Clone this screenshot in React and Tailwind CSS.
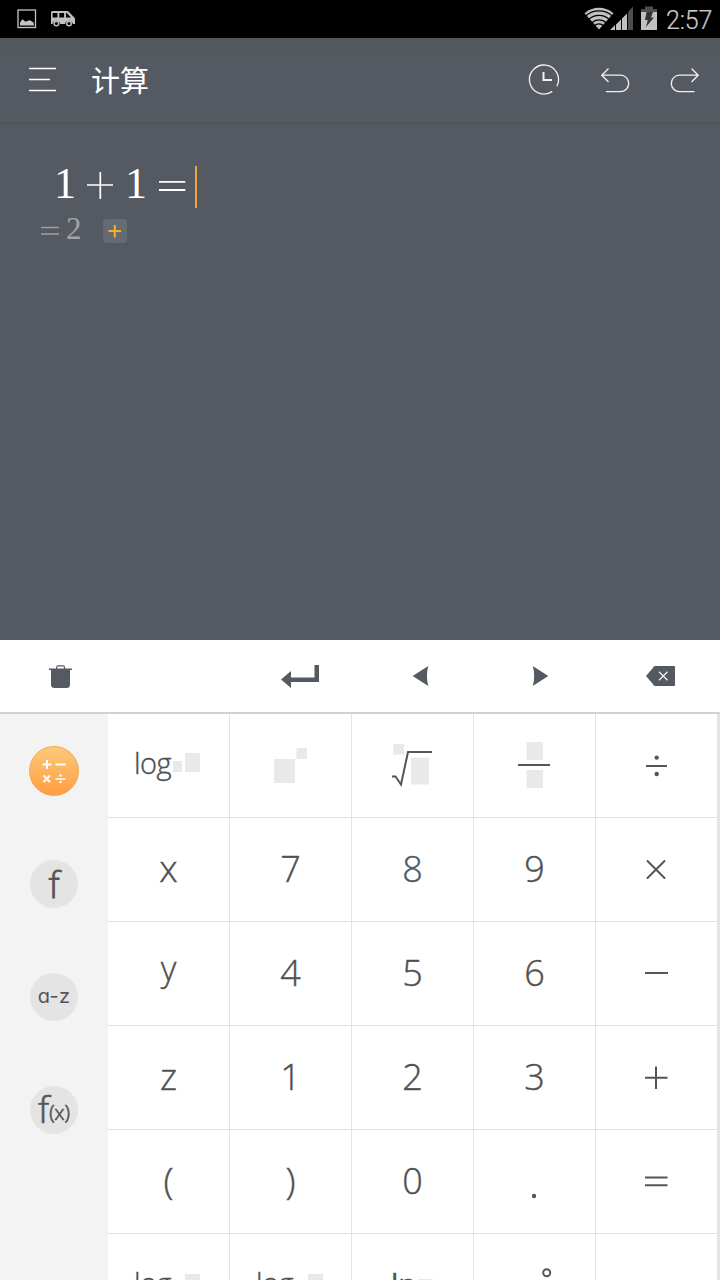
const glyph =
  "font-['Open_Sans','Noto_Sans',sans-serif] font-light leading-none [-webkit-text-stroke:0.4px_currentColor]";

function Square({ className }) {
  return <span className={`block shrink-0 bg-[#e9e9e9] ${className}`} />;
}

function StatusBar() {
  return (
    <div className="flex h-[38px] shrink-0 items-center bg-black text-[#c0c0c0]">
      <svg className="ml-[17px] h-5 w-5" viewBox="17 9 20 20" fill="none">
        <rect x="18" y="10" width="17.5" height="17.5" stroke="#c4c4c4" strokeWidth="1.3" />
        <path d="M20 25.500v-3l2.500-3.200 3 2.400 2.500-1 2-.4 3.500 2.200 .5 3z" fill="#c4c4c4" />
      </svg>
      <svg className="ml-[13px] h-5 w-[26px]" viewBox="50 9 26 20">
        <path
          fill="#c0c0c0"
          fillRule="evenodd"
          d="M52.500 11H67q1 0 1.800 .8l5 5.200q1.200 1 1.200 2v5h-2.200a3.900 3.900 0 0 0-7.700 0H60.200a3.900 3.900 0 0 0-7.700 0H51V12.500q0-1.500 1.500-1.500zM52.600 13v4.600h4.800V13zM59.300 13v4.600h4.800V13zM66 13v4.600h5L66.800 13z"
        />
        <circle cx="56.400" cy="23.500" r="2.300" fill="none" stroke="#c0c0c0" strokeWidth="1.500" />
        <circle cx="69" cy="23.500" r="2.300" fill="none" stroke="#c0c0c0" strokeWidth="1.500" />
      </svg>
      <svg className="ml-auto h-[26px] w-[74px]" viewBox="584 6 74 26">
        <path d="M584.500 13.200C592.500 5.800 605.500 5.800 613.500 13.200L599 29.500z" fill="#c0c0c0" />
        <g fill="none" stroke="#000" strokeWidth="1.300">
          <path d="M585.500 16.200C593 9.200 605 9.200 612.500 16.200" />
          <path d="M588.500 19.700C594.500 14 603.500 14 609.500 19.700" />
          <path d="M591.500 23C596 18.800 602 18.800 606.500 23" />
          <path d="M594 26.200C597 23.200 601 23.200 604 26.200" />
        </g>
        <path d="M610 30l5-5v5zM616 24.500l5-5V30h-5zM622 18.500l5-5V30h-5z" fill="#c0c0c0" />
        <path d="M628 12l5-5.500V30h-5z" fill="#4d4d4d" />
        <path d="M645 6.500h8V9h4v4h-16V9h4z" fill="#4d4d4d" />
        <path d="M641 12h16v18h-16z" fill="#c0c0c0" />
        <path d="M646.500 12h6.500l-2 5.500h3L646 27l1.800-7H645z" fill="#333" />
      </svg>
      <span className="ml-2 mr-[8px] w-[46px] pt-[2px] whitespace-nowrap font-[Roboto,sans-serif] text-[25px] font-light leading-none tracking-[-0.2px] text-[#c8c8c8] [-webkit-text-stroke:0.2px_currentColor]">
        2:57
      </span>
    </div>
  );
}

function Header() {
  return (
    <header className="flex h-[86px] shrink-0 items-center border-b-2 border-[#505558] bg-gradient-to-b from-[#535858] to-[#555a62] to-25% pb-px">
      <svg className="ml-7 h-[26px] w-[30px]" viewBox="28 67 30 26" stroke="#fff" strokeWidth="1.300">
        <path d="M29 68.500H56M29 79.500H50M29 90.500H56" />
      </svg>
      <h1 className="ml-[33px] font-['Noto_Sans_CJK_SC',sans-serif] text-[29px] leading-none text-white">计算</h1>
      <div className="ml-auto mr-[18px] flex items-center gap-[40px]">
        <svg className="h-8 w-8" viewBox="528 64 32 32" fill="none" stroke="#f2f2f0" strokeWidth="1.300">
          <path d="M552.300 91.400A14.500 14.500 0 1 1 556.800 86.300" />
          <path d="M543.500 72v8h8.500" strokeWidth="2" />
        </svg>
        <svg className="h-8 w-8" viewBox="600 64 32 32" fill="none" stroke="#f2f2f0" strokeWidth="1.300">
          <path d="M608.500 68.500l-6.700 6.700 6.700 6.800M602 75.200h18.500a8.200 8.200 0 0 1 0 16.400H606" />
        </svg>
        <svg className="-ml-[2px] h-8 w-8" viewBox="670 64 32 32" fill="none" stroke="#f2f2f0" strokeWidth="1.300">
          <path d="M691.500 68.500l6.700 6.700-6.700 6.800M698 75.200H679.500a8.200 8.200 0 0 0 0 16.400H694.500" />
        </svg>
      </div>
    </header>
  );
}

function Display() {
  return (
    <section className="flex h-[516px] shrink-0 flex-col bg-[#555a62] pt-[42px] font-['Liberation_Serif',serif]">
      <div className="flex h-[42px] items-center pl-[54px] text-[44px] leading-none text-white">
        <span className="-mt-[6px] w-[31px]">1</span>
        <svg className="-mt-[4px] h-[30px] w-[30px]" viewBox="85 170 30 30" stroke="#fff" strokeWidth="1.700">
          <path d="M87 185H113M100.300 172v27" />
        </svg>
        <span className="-mt-[6px] ml-[10px] w-[33px]">1</span>
        <svg className="-mt-[2px] h-[30px] w-[28px]" viewBox="158 171 28 30" stroke="#fff" strokeWidth="1.800">
          <path d="M159 181.800H185.300M159 190H185.300" />
        </svg>
        <span className="ml-[9px] h-[42px] w-[1.500px] bg-[#eca53a]" />
      </div>
      <div className="flex h-[46px] items-center pl-10 text-[31px] leading-none text-[#a3a4a4]">
        <svg className="h-[14px] w-[20px]" viewBox="40 223 20 14" stroke="#9fa19f" strokeWidth="1.300">
          <path d="M41 226.500H59M41 233H59" />
        </svg>
        <span className="-mt-[6px] ml-[6px] w-[16px]">2</span>
        <button className="ml-[21px] flex h-6 w-6 items-center justify-center rounded-[4px] bg-[#656b72]">
          <svg className="h-[14px] w-[14px]" viewBox="0 0 14 14" stroke="#fbae21" strokeWidth="2">
            <path d="M.5 7H13M6.800 1V13.500" />
          </svg>
        </button>
      </div>
    </section>
  );
}

function Toolbar() {
  return (
    <div className="grid h-[74px] shrink-0 grid-cols-6 border-b-2 border-[#d1d1d1] bg-white text-[#555a62]">
      <svg className="h-[72px] w-[120px]" viewBox="0 640 120 72" fill="currentColor">
        <path d="M51 670h19v14.500q0 3.500-3.500 3.500h-12q-3.500 0-3.500-3.500z" />
        <path d="M49 668.500h23v1.500H49z" />
        <path d="M56.700 669v-1.800q0-1.400 1.400-1.400h5q1.400 0 1.400 1.400v1.800" fill="none" stroke="currentColor" strokeWidth="1.200" />
      </svg>
      <span />
      <svg className="h-[72px] w-[120px]" viewBox="240 640 120 72" fill="currentColor">
        <path d="M281 679.500l10-8.500v6.500h23.500V665h4.500v17h-28v6z" />
      </svg>
      <svg className="h-[72px] w-[120px]" viewBox="360 640 120 72" fill="currentColor">
        <path d="M412.700 676L428.200 666q-2.500 10 0 20z" />
      </svg>
      <svg className="h-[72px] w-[120px]" viewBox="480 640 120 72" fill="currentColor">
        <path d="M548.300 676L532.800 666q2.800 10 0 20z" />
      </svg>
      <svg className="h-[72px] w-[120px]" viewBox="600 640 120 72" fill="currentColor">
        <path d="M646 676l8.500-10H674q1 0 1 1v18q0 1-1 1h-19.500z" />
        <path d="M659 671.700l8.500 8.600M667.500 671.700l-8.500 8.600" stroke="#f0f0f0" strokeWidth="1.300" />
      </svg>
    </div>
  );
}

function Sidebar() {
  return (
    <nav className="flex w-[108px] shrink-0 flex-col items-center bg-[#f3f3f3] pt-8 text-[#555]">
      <button className="flex h-[50px] w-[50px] shrink-0 items-center justify-center rounded-full border border-[#f0aa4f] bg-gradient-to-b from-[#fdc978] to-[#fe9d41]">
        <svg className="h-[48px] w-[48px] shrink-0" viewBox="30 747 48 48" stroke="#fff" strokeWidth="2" fill="#fff">
          <path d="M42.500 764.500h9M47 760v9M55.500 764.500h10M43.500 775.500l6.500 6.500M50 775.500l-6.500 6.500" />
          <path d="M55.500 779h10" strokeWidth="1.500" />
          <circle cx="60.500" cy="775.500" r="1.200" stroke="none" />
          <circle cx="60.500" cy="782" r="1.200" stroke="none" />
        </svg>
      </button>
      <button className="mt-16 flex h-12 w-12 shrink-0 items-center justify-center rounded-full bg-[#e4e4e4] pb-[1px] font-['Open_Sans',sans-serif] text-[37px] font-light leading-none [-webkit-text-stroke:0.8px_currentColor]">
        f
      </button>
      <button className="mt-[65px] flex h-12 w-12 shrink-0 items-center justify-center rounded-full bg-[#e4e4e4] pb-[3px] font-[Inter,sans-serif] text-[20px] leading-none tracking-[0.3px] [font-feature-settings:'cv11']">
        a-z
      </button>
      <button className="mt-[65px] flex h-12 w-12 shrink-0 items-baseline justify-center rounded-full bg-[#e4e4e4] pt-[4px] font-['Open_Sans',sans-serif] text-[37px] font-light leading-none [-webkit-text-stroke:0.7px_currentColor]">
        f<span className="relative -top-[3px] text-[20px] leading-none">(x)</span>
      </button>
    </nav>
  );
}

function Key({ className = "", last, children }) {
  return (
    <button
      className={`flex h-[104px] items-center justify-center overflow-hidden border-b border-[#e3e3e3] ${last ? "" : "border-r"} ${glyph} ${className}`}
    >
      {children}
    </button>
  );
}

function Symbol({ children, width = 2 }) {
  return (
    <svg className="h-[103px] w-[121px] shrink-0" viewBox="0 0 121 103" fill="none" stroke="#555" strokeWidth={width}>
      {children}
    </svg>
  );
}

const letter = "pb-[5px] text-[37px]";
const digit = "pb-[1px] text-[36px]";

function Keypad() {
  return (
    <div className="grid w-[609px] shrink-0 grid-cols-[122px_122px_122px_122px_121px] content-start bg-white text-[#505050]">
      <Key className="items-start justify-start pl-[26px] pt-[34px] text-[29px]">
        <span className="w-[39px] text-left tracking-[-0.5px]">log</span>
        <Square className="mt-[13px] h-[11px] w-[9px]" />
        <Square className="ml-[3px] mt-[5px] h-[19px] w-[15px]" />
      </Key>
      <Key>
        <Symbol>
          <path d="M44 45h21v24H44zM66.500 34h10.500v11H66.500z" fill="#e9e9e9" stroke="none" />
        </Symbol>
      </Key>
      <Key>
        <Symbol>
          <path d="M41.500 30h10.500v10.500H41.500zM59 43.500h18v27H59z" fill="#e9e9e9" stroke="none" />
          <path d="M40 62.500h3.500l5.500 8L56 38h24" />
        </Symbol>
      </Key>
      <Key>
        <Symbol>
          <path d="M52.500 28H69v18H52.500zM52.500 56H69v18H52.500z" fill="#e9e9e9" stroke="none" />
          <path d="M44 51h32" />
        </Symbol>
      </Key>
      <Key last>
        <Symbol>
          <path d="M50 52h21" />
          <circle cx="60.700" cy="43.600" r="2.200" fill="#555" stroke="none" />
          <circle cx="60.700" cy="60" r="2.200" fill="#555" stroke="none" />
        </Symbol>
      </Key>

      <Key className={letter}>x</Key>
      <Key className={digit}>7</Key>
      <Key className={`${digit} text-[#4c5a6c]`}>8</Key>
      <Key className={digit}>9</Key>
      <Key last>
        <Symbol>
          <path d="M51.500 43l17 17M68.500 43l-17 17" strokeLinecap="round" />
        </Symbol>
      </Key>

      <Key className="pb-[12px] text-[34px]">y</Key>
      <Key className={digit}>4</Key>
      <Key className={digit}>5</Key>
      <Key className={digit}>6</Key>
      <Key last>
        <Symbol>
          <path d="M49 51h23" />
        </Symbol>
      </Key>

      <Key className="pb-[4px] text-[37px]">z</Key>
      <Key className={digit}>1</Key>
      <Key className={digit}>2</Key>
      <Key className={digit}>3</Key>
      <Key last>
        <Symbol>
          <path d="M49 51.700h22.500M60 40.500v22.500" />
        </Symbol>
      </Key>

      <Key className={letter}>(</Key>
      <Key className={letter}>)</Key>
      <Key className={digit}>0</Key>
      <Key>
        <Symbol>
          <circle cx="60" cy="66" r="2.200" fill="#555" stroke="none" />
        </Symbol>
      </Key>
      <Key last>
        <Symbol>
          <path d="M49 47.500h22.500M49 55.200h22.500" />
        </Symbol>
      </Key>

      <Key className="items-start justify-start pl-[26px] pt-[34px] text-[29px]">
        <span className="w-[39px] text-left tracking-[-0.5px]">log</span>
        <Square className="ml-[12px] mt-[6px] h-[19px] w-[15px]" />
      </Key>
      <Key className="items-start justify-start pl-[26px] pt-[34px] text-[29px]">
        <span className="w-[39px] text-left tracking-[-0.5px]">log</span>
        <Square className="ml-[13px] mt-[6px] h-[19px] w-[15px]" />
      </Key>
      <Key className="items-start justify-start pl-[39px] pt-[35px] text-[29px] !font-normal">
        ln
        <Square className="ml-[2px] mt-[10px] h-[19px] w-[15px]" />
      </Key>
      <Key>
        <Symbol>
          <circle cx="72.700" cy="38.700" r="3.500" />
        </Symbol>
      </Key>
      <Key last />
    </div>
  );
}

export default function App() {
  return (
    <main className="flex h-[1280px] w-[720px] flex-col overflow-hidden bg-white">
      <StatusBar />
      <Header />
      <Display />
      <Toolbar />
      <div className="flex min-h-0 flex-1 overflow-hidden">
        <Sidebar />
        <Keypad />
        <div className="flex-1 bg-[#e4e4e4]" />
      </div>
    </main>
  );
}
